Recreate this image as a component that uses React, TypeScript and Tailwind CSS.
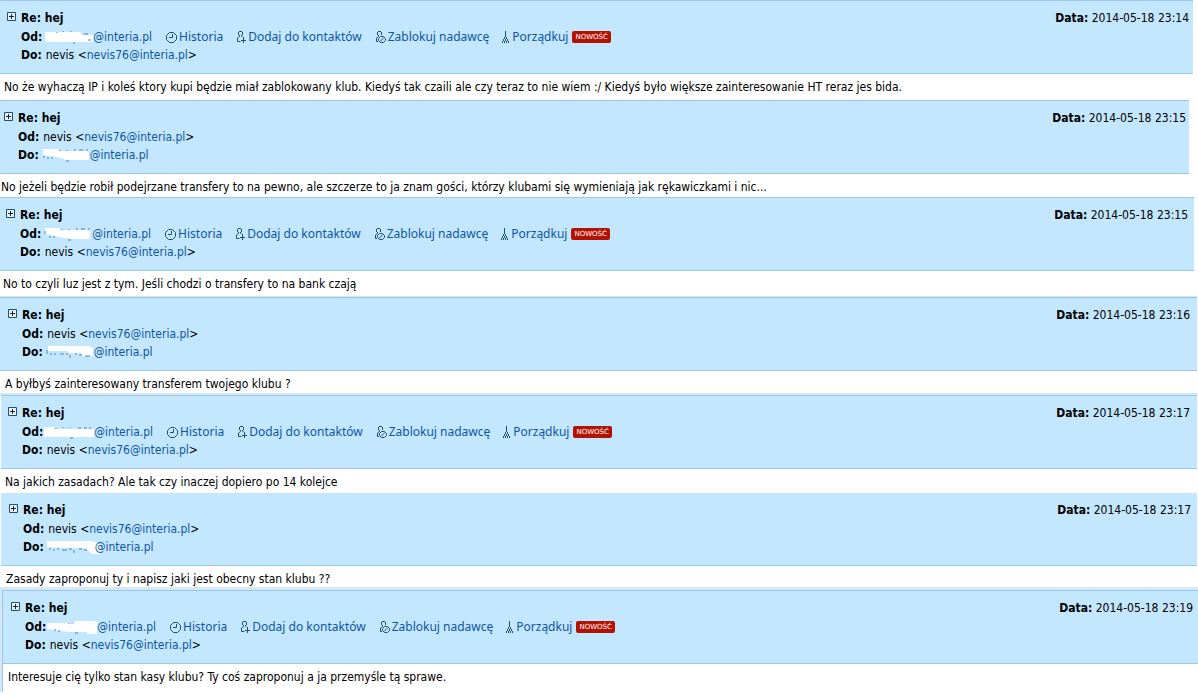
import { clsx } from 'clsx';

const SENDER_ACTIONS = [
  { icon: HistoryIcon, label: 'Historia' },
  { icon: AddContactIcon, label: 'Dodaj do kontaktów' },
  { icon: BlockIcon, label: 'Zablokuj nadawcę' },
  { icon: BroomIcon, label: 'Porządkuj', isNew: true },
];

type Message = {
  date: string;
  incoming: boolean;
  mask: { shape: string; traces: string };
  text: string;
  frame?: string;
  header: string;
  body: string;
};

const messages: Message[] = [
  {
    date: '2014-05-18 23:14',
    incoming: true,
    mask: { shape: 'M-1 2H35V5H47V12H-1Z', traces: 'M11 2v1M17 1v1M25 1v1M27 13h2M38 4h4M42 10h3' },
    text: 'No że wyhaczą IP i koleś ktory kupi będzie miał zablokowany klub. Kiedyś tak czaili ale czy teraz to nie wiem :/ Kiedyś było większe zainteresowanie HT reraz jes bida.',
    header: 'mr-[5px] border-t pl-[7px] pr-1',
    body: 'pl-1 pb-[5px]',
  },
  {
    date: '2014-05-18 23:15',
    incoming: false,
    mask: { shape: 'M0 1H15V3H46V12H23L19 10L0 7Z', traces: 'M0 9h2M4 10h2M8 10h2M17 2v1M24 2v1M23 13h3M31 2h2M36 2h4M43 2h2' },
    text: 'No jeżeli będzie robił podejrzane transfery to na pewno, ale szczerze to ja znam gości, którzy klubami się wymieniają jak rękawiczkami i nic...',
    header: 'mr-[9px] border-t pl-1 pr-[3px]',
    body: 'pl-px pb-[2px]',
  },
  {
    date: '2014-05-18 23:15',
    incoming: true,
    mask: { shape: 'M0 1H15V3H45V12H25L14 10L0 7Z', traces: 'M0 4v3M4 10h2M8 10h2M17 2v1M24 2v1M23 13h3M31 2h2M36 2h4M43 2h2' },
    text: 'No to czyli luz jest z tym. Jeśli chodzi o transfery to na bank czają',
    header: 'mr-1 border-t pl-[6px] pr-[6px]',
    body: 'pl-[3px] pb-1',
  },
  {
    date: '2014-05-18 23:16',
    incoming: false,
    mask: { shape: 'M1 1H41L46 3V11H35V8H21V6H1Z', traces: 'M0 5v4M3 9h2M7 9h2M13 9h4M19 9h2M23 10v3M28 9h2M32 10h3M38 11h5' },
    text: 'A byłbyś zainteresowany transferem twojego klubu ?',
    frame: 'border-t border-[#d5e8f8]',
    header: 'mr-px border-t pl-2 pr-[7px]',
    body: 'pl-[5px] pb-px',
  },
  {
    date: '2014-05-18 23:17',
    incoming: true,
    mask: { shape: 'M-3 2H7V4H47V12H-3Z', traces: 'M9 3v1M16 2v1M23 2v1M23 13h3M31 3h3M37 3h3M42 3h2' },
    text: 'Na jakich zasadach? Ale tak czy inaczej dopiero po 14 kolejce',
    frame: 'border-t-2 border-[#d5e8f8]',
    header: 'ml-px mr-px border-t pl-[7px] pr-[7px]',
    body: 'pl-[5px] pb-[3px]',
  },
  {
    date: '2014-05-18 23:17',
    incoming: false,
    mask: { shape: 'M-1 1H43L52 4V14H44L37 8H21L-1 7Z', traces: 'M1 9h2M5 10h2M9 9h2M14 10h5M21 9h3M26 10v3M31 9h3M36 10h3' },
    text: 'Zasady zaproponuj ty i napisz jaki jest obecny stan klubu ??',
    header: 'ml-px mr-px pl-2 pr-[6px]',
    body: 'pl-[6px]',
  },
  {
    date: '2014-05-18 23:19',
    incoming: true,
    mask: { shape: 'M-3 3H25V1H47V14H37V12H19L-3 9Z', traces: 'M4 10h2M8 11h2M19 3v1M22 3v1M25 13h3' },
    text: 'Interesuje cię tylko stan kasy klubu? Ty coś zaproponuj a ja przemyśle tą sprawe.',
    frame: 'border-t-[3px] border-l-2 border-[#d5e8f8]',
    header: 'border-t border-l pl-2 pr-[5px]',
    body: 'border-l border-[#9cc6e2] pl-[5px] pb-[7px]',
  },
];

function HistoryIcon() {
  return (
    <svg width="11" height="12" viewBox="0 0 11 12" fill="none" stroke="#1d4f73" aria-hidden="true">
      <path d="M3.5 1.5h4l3 3v4l-3 3h-4l-3-3v-4z" />
      <path d="M6.5 3v3.5H3" />
    </svg>
  );
}

function AddContactIcon() {
  return (
    <svg width="10" height="12" viewBox="0 0 10 12" fill="none" stroke="#1d4f73" aria-hidden="true">
      <path d="M3 .5h3M2.5 1v3M6.5 1v3M3.5 4v1.5l-2 1.5v3.5h3M5.5 4v1l1 1M7.5 6v6M5 9.5h5" />
    </svg>
  );
}

function BlockIcon() {
  return (
    <svg width="11" height="12" viewBox="0 0 11 12" fill="none" stroke="#1d4f73" aria-hidden="true">
      <path d="M3 .5h3M2.5 1v3M6.5 1v3M3.5 4v1.5l-2 1.5v3.5H3" />
      <path d="M5.5 5.5h3l2 2v2l-2 2h-3l-2-2v-2zM5 10.5l4-4" />
    </svg>
  );
}

function BroomIcon() {
  return (
    <svg width="8" height="12" viewBox="0 0 8 12" fill="none" stroke="#1d4f73" aria-hidden="true">
      <path d="M3.5 0v6M2.5 6v2M4.5 6v2M1.5 8v2M5.5 8v2M.5 10v2M6.5 10v2M3.5 8v2M2.5 10v2M4.5 10v2" />
    </svg>
  );
}

function MaskedAddress({ mask }: { mask: Message['mask'] }) {
  return (
    <span className="inline-flex items-center">
      <svg className="overflow-visible" width="47" height="14" viewBox="0 0 47 14" aria-hidden="true">
        <path d={mask.shape} fill="#fff" />
        <path d={mask.traces} stroke="#4a86b8" fill="none" />
      </svg>
      <a href="#" className="text-[#0d569f]">@interia.pl</a>
    </span>
  );
}

function OwnAddress() {
  return (
    <span>
      nevis &lt;<a href="#" className="text-[#0d569f]">nevis76@interia.pl</a>&gt;
    </span>
  );
}

function MessageHeader({ message }: { message: Message }) {
  const { incoming, mask, date } = message;

  return (
    <header className={clsx('flex items-start border-b border-[#9cc6e2] bg-[#c3e7ff] pt-2 pb-[9px]', message.header)}>
      <button type="button" aria-label="Rozwiń" className="mt-[3px] mr-[5px] shrink-0">
        <svg width="9" height="9" viewBox="0 0 9 9" fill="#e6f3fd" stroke="#1d4f73">
          <path d="M.5 .5h8v8h-8z" />
          <path d="M2 4.5h5M4.5 2v5" stroke="#222" />
        </svg>
      </button>

      <div className="flex-1">
        <h2 className="font-bold leading-[19px]">Re: hej</h2>
        <div className="flex items-center gap-1">
          <b>Od:</b>
          {incoming ? <MaskedAddress mask={mask} /> : <OwnAddress />}
          {incoming && (
            <div className="ml-[10px] flex items-center gap-[13px] font-['Noto_Sans',sans-serif]">
              {SENDER_ACTIONS.map(({ icon: Icon, label, isNew }) => (
                <a key={label} href="#" className="flex items-center gap-[2px] text-[#0d569f]">
                  <Icon />
                  {label}
                  {isNew && (
                    <span className="ml-[2px] flex h-3 items-center rounded-xs bg-[#b31200] px-[3px] font-['DejaVu_Sans',sans-serif] text-[7px] text-white">
                      NOWOŚĆ
                    </span>
                  )}
                </a>
              ))}
            </div>
          )}
        </div>
        <div className="flex items-center gap-1">
          <b>Do:</b>
          {incoming ? <OwnAddress /> : <MaskedAddress mask={mask} />}
        </div>
      </div>

      <p className="leading-[19px]">
        <b>Data:</b> {date}
      </p>
    </header>
  );
}

export default function App() {
  return (
    <main className="min-h-screen bg-white font-['DejaVu_Sans_Condensed','DejaVu_Sans',sans-serif] text-[12px] leading-[18px] text-black">
      {messages.map((message, index) => (
        <article key={index} className={message.frame}>
          <MessageHeader message={message} />
          <p className={clsx('pt-[5px] leading-4', message.body)}>{message.text}</p>
        </article>
      ))}
    </main>
  );
}
